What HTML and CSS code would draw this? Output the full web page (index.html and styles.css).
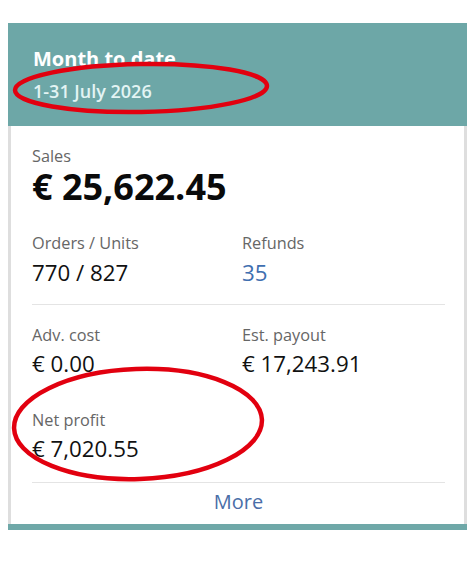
FILE: index.html
```html
<!DOCTYPE html>
<html>
<head>
<meta charset="utf-8">
<link rel="stylesheet" href="styles.css">
</head>
<body>
<div class="card">
  <div class="head">
    <div class="title">Month to date</div>
    <div class="date">1-31 July 2026</div>
  </div>
  <div class="body">
    <div class="sec sec1">
      <div class="label">Sales</div>
      <div class="big">€ 25,622.45</div>
      <div class="grid g1">
        <div class="item">
          <div class="label">Orders / Units</div>
          <div class="value">770 / 827</div>
        </div>
        <div class="item">
          <div class="label">Refunds</div>
          <div class="value blue">35</div>
        </div>
      </div>
    </div>
    <div class="sec sec2">
      <div class="grid g2">
        <div class="item">
          <div class="label">Adv. cost</div>
          <div class="value">€ 0.00</div>
        </div>
        <div class="item">
          <div class="label">Est. payout</div>
          <div class="value">€ 17,243.91</div>
        </div>
        <div class="item">
          <div class="label">Net profit</div>
          <div class="value">€ 7,020.55</div>
        </div>
      </div>
    </div>
    <div class="more">More</div>
  </div>
</div>
<svg class="marks" width="476" height="582" viewBox="0 0 476 582">
  <ellipse cx="141" cy="88" rx="126" ry="24" transform="rotate(-1 141 88)"/>
  <ellipse cx="138" cy="424" rx="124" ry="55" transform="rotate(-2 138 424)"/>
</svg>
</body>
</html>
```
FILE: styles.css
```css
html, body {
  margin: 0;
  padding: 0;
  background: #ffffff;
}
body {
  font-family: "Open Sans", "Noto Sans", sans-serif;
  width: 476px;
  height: 582px;
  position: relative;
  overflow: hidden;
}
.card {
  margin: 23px 0 0 8px;
  width: 459px;
  border-bottom: 6px solid #6fa8a8;
}
.head {
  background: #6da7a7;
  padding: 24px 25px;
}
.title {
  font-size: 20px;
  line-height: 24px;
  font-weight: 700;
  color: #ffffff;
}
.date {
  margin-top: 9px;
  font-size: 18px;
  line-height: 22px;
  font-weight: 600;
  color: #e3f4f4;
}
.body {
  background: #fff;
  border-left: 3px solid #dedede;
  border-right: 3px solid #dedede;
  padding: 0 19px 0 21px;
}
.sec {
  border-bottom: 1px solid #e4e4e4;
}
.sec1 {
  padding: 20px 0 17px;
}
.sec2 {
  padding: 20px 0 19px;
}
.label {
  font-size: 16.3px;
  line-height: 20px;
  color: #666666;
}
.big {
  margin-top: 1px;
  font-size: 36px;
  line-height: 40px;
  font-weight: 700;
  color: #0a0a0a;
}
.grid {
  display: grid;
  grid-template-columns: 210px 1fr;
}
.g1 {
  margin-top: 26px;
}
.g2 {
  row-gap: 32px;
}
.value {
  margin-top: 6px;
  font-size: 22.3px;
  line-height: 28px;
  color: #111111;
}
.g2 .value {
  margin-top: 5px;
}
.blue {
  color: #3f6fb0;
}
.more {
  padding: 7px 0 10px;
  text-align: center;
  font-size: 20px;
  line-height: 24px;
  color: #4a6ea8;
}
.marks {
  position: absolute;
  left: 0;
  top: 0;
  pointer-events: none;
}
.marks ellipse {
  fill: none;
  stroke: #e2000f;
  stroke-width: 4.5;
}
```
